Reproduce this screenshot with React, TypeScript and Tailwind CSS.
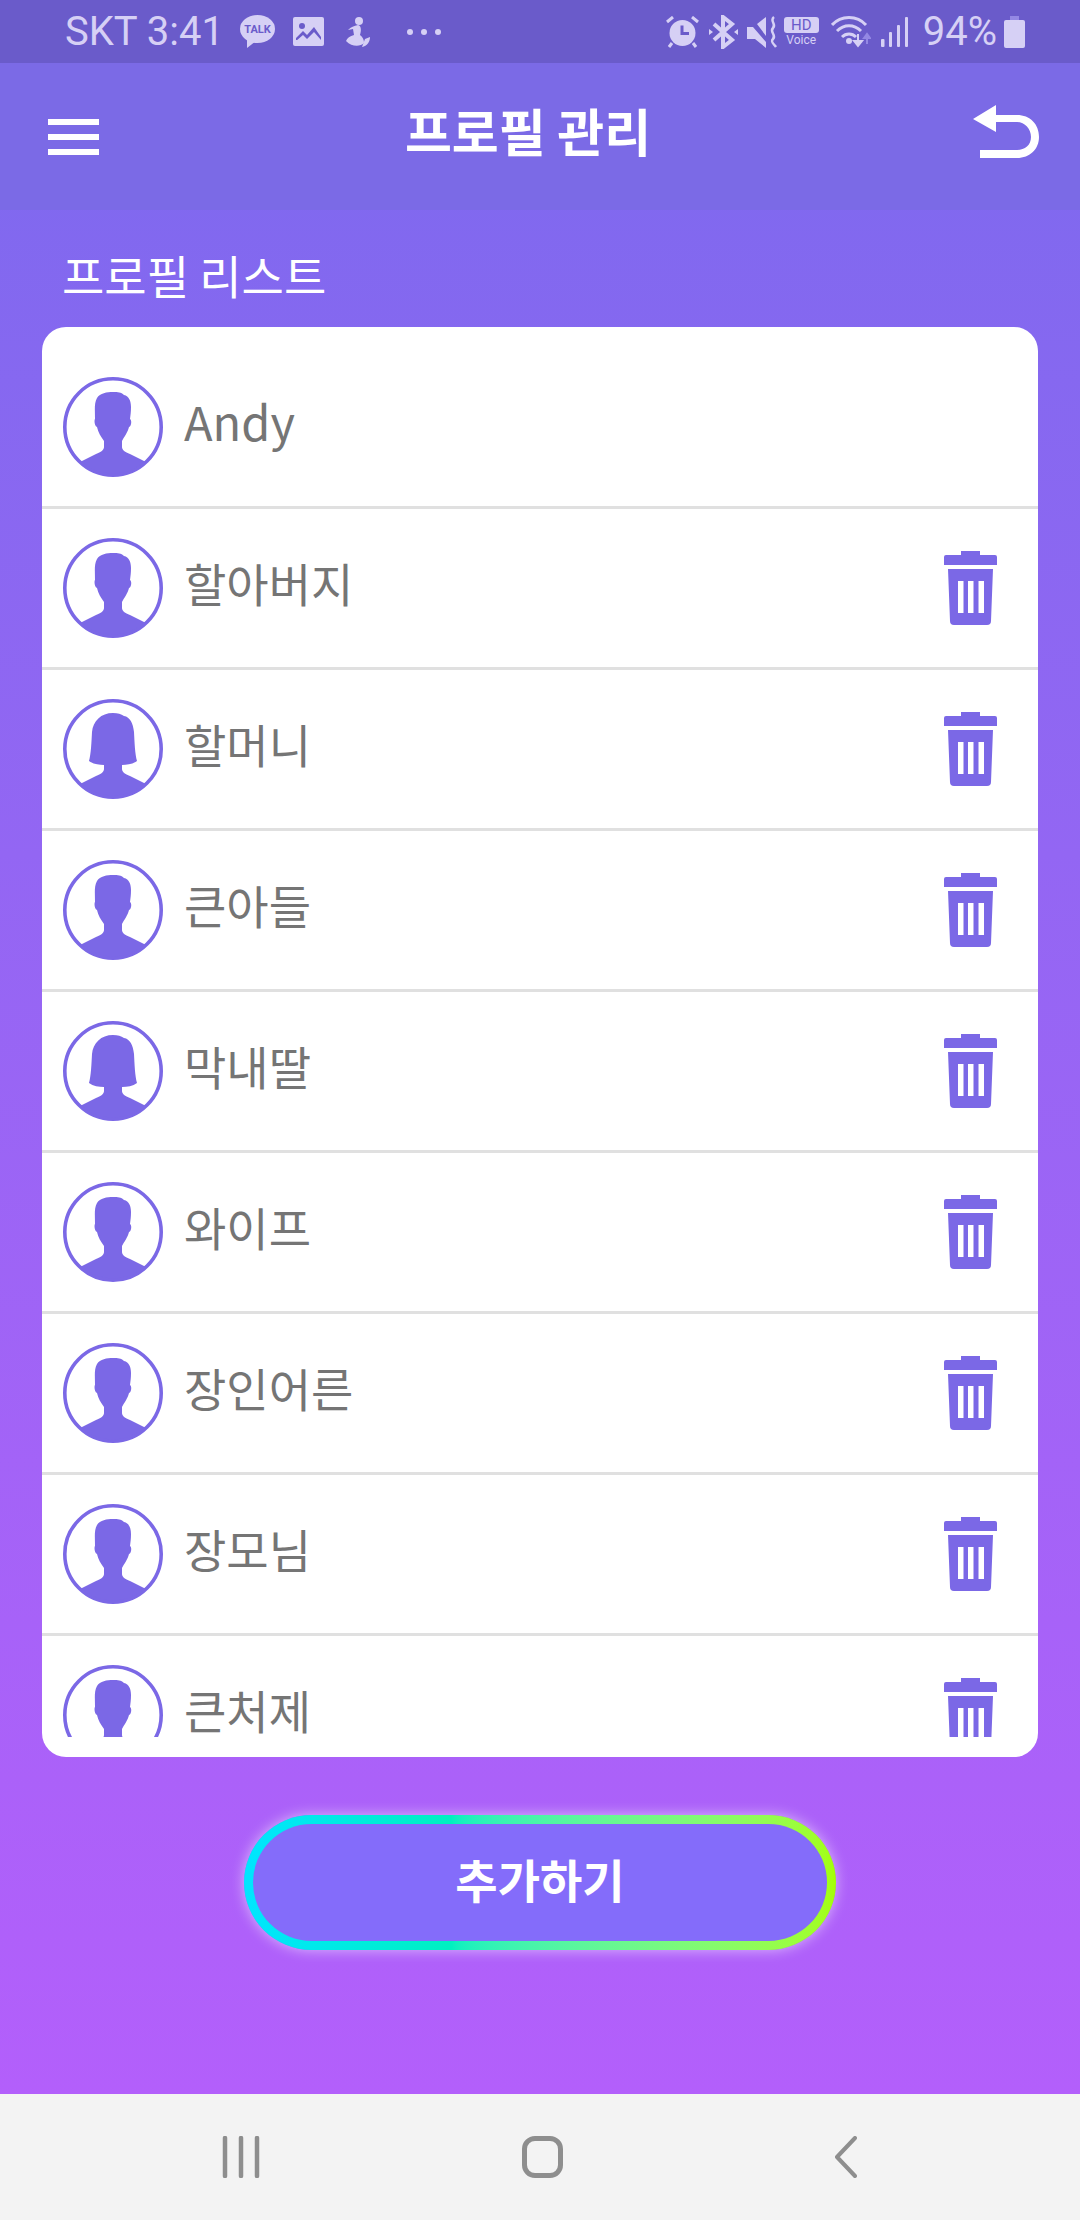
const FONT = 'font-["Noto_Sans_CJK_KR","Noto_Sans",sans-serif]'

type Person = { name: string; female?: boolean; main?: boolean }

const people: Person[] = [
  { name: 'Andy', main: true },
  { name: '할아버지' },
  { name: '할머니', female: true },
  { name: '큰아들' },
  { name: '막내딸', female: true },
  { name: '와이프' },
  { name: '장인어른' },
  { name: '장모님' },
  { name: '큰처제' },
]

function Avatar({ female }: { female?: boolean }) {
  return (
    <svg viewBox="0 0 100 100" className="w-[100px] h-[100px] shrink-0">
      <circle cx="50" cy="50" r="48" fill="#fff" />
      {female ? (
        <path
          fill="#7b68e6"
          d="M50 14C55 14 58 15 61 17C67 18 70 24 71 33C71.500 43 72 55 74 62C70 65 64 66 59 66L59 70C59 73 62 75 67 77L83 85A48 48 0 0 1 17 85L33 77C38 75 41 73 41 70L41 66C36 66 30 65 26 62C28 55 28.500 43 29 33C30 22 38 14 50 14Z"
        />
      ) : (
        <path
          fill="#7b68e6"
          d="M32 42C32 34 31 26 34 21C37 16 44 15 50 15C55 15 58 15 61 18C66 19 68 24 68 30C68 35 67.500 38 67 42C69 43 68.500 49 66 50C65 55 61 60 59 64L59 70C59 73 62 75 67 77L83 85A48 48 0 0 1 17 85L33 77C38 75 41 73 41 70L41 64C38 60 35 55 34 50C31.500 49 31 43 32 42Z"
        />
      )}
      <circle cx="50" cy="50" r="48.200" fill="none" stroke="#7b68e6" strokeWidth="3.600" />
    </svg>
  )
}

function Trash() {
  return (
    <svg viewBox="0 0 53 74" className="w-[53px] h-[74px] shrink-0">
      <path fill="#7b68e6" d="M17 0H36V4H51Q53 4 53 6V14H0V6Q0 4 2 4H17Z" />
      <path
        fill="#7b68e6"
        fillRule="evenodd"
        d="M4 18H49L47 70Q47 74 43 74H10Q6 74 6 70ZM14 30V62H19.500V30ZM24 30V62H29.500V30ZM34.500 30V62H40V30Z"
      />
    </svg>
  )
}

function StatusIcons() {
  const c = '#d6d0f5'
  return (
    <div className="flex items-center">
      {/* alarm */}
      <svg viewBox="0 0 33 32" className="w-[33px] h-[32px]">
        <circle cx="16.500" cy="17" r="13" fill={c} />
        <path d="M14.500 9.500H17.500V16H23V19H14.500Z" fill="#6a5bca" />
        <path d="M1 6L7 1M32 6L26 1M6 27L3 31M27 27L30 31" stroke={c} strokeWidth="3" />
      </svg>
      {/* bluetooth */}
      <svg viewBox="0 0 29 34" className="w-[29px] h-[34px] ml-[10px]">
        <path d="M5 9L23 25L14 32V2L23 9L5 25" fill="none" stroke={c} strokeWidth="4" />
        <path d="M0 14L4 17L0 20ZM29 14L25 17L29 20Z" fill={c} />
      </svg>
      {/* mute + vibrate */}
      <svg viewBox="0 0 31 32" className="w-[31px] h-[32px] ml-[9px]">
        <path d="M0 11H6L19 26V32L8 23H0ZM10 8L19 1V20Z" fill={c} />
        <path d="M27 1C22 5 30 8 26 12C22 16 30 19 26 23C23 26 27 28 29 31" fill="none" stroke={c} strokeWidth="2.500" />
      </svg>
      {/* HD voice */}
      <div className="ml-[6px] w-[35px] flex flex-col items-center">
        <div className="w-[35px] h-[16px] rounded-[3px] bg-[#d6d0f5] text-[#6a5bca] text-[15px] leading-[16px] text-center font-['Roboto',sans-serif]">HD</div>
        <div className="text-[#d6d0f5] text-[12px] leading-[13px] mt-[1px] font-['Roboto',sans-serif]">Voice</div>
      </div>
      {/* wifi */}
      <svg viewBox="0 0 40 33" className="w-[40px] h-[33px] ml-[12px]">
        <path d="M1 10C10 0 26 0 35 10M6 16C13 9 23 9 30 16M11 22C15 18 21 18 25 22" fill="none" stroke={c} strokeWidth="3" />
        <circle cx="18" cy="26" r="3" fill={c} />
        <path d="M27 19V27M23 26L27 31L31 26Z" stroke={c} strokeWidth="2" fill={c} />
        <path d="M36 29V21M33 23L36 19L39 23Z" stroke="#9488e4" strokeWidth="2" fill="#9488e4" />
      </svg>
      {/* signal */}
      <svg viewBox="0 0 27 30" className="w-[27px] h-[30px] ml-[10px]">
        <rect x="0" y="22" width="3.500" height="8" rx="1" fill={c} />
        <rect x="8" y="15" width="3" height="15" rx="1" fill={c} />
        <rect x="16" y="8" width="3" height="22" rx="1" fill={c} />
        <rect x="24" y="0" width="3" height="30" rx="1" fill={c} />
      </svg>
      <span className="ml-[15px] text-[#d6d0f5] text-[40px] leading-none font-['Roboto',sans-serif]">94%</span>
      {/* battery */}
      <svg viewBox="0 0 21 32" className="w-[21px] h-[32px] ml-[7px]">
        <path d="M6 0H15V4H6Z" fill="#9488e4" />
        <rect x="0" y="4" width="21" height="28" rx="2" fill={c} />
      </svg>
    </div>
  )
}

function StatusLeft() {
  const c = '#d6d0f5'
  return (
    <div className="flex items-center">
      <span className="text-[#d6d0f5] text-[40px] leading-none font-['Roboto',sans-serif]">SKT 3:41</span>
      <svg viewBox="0 0 35 33" className="w-[35px] h-[33px] ml-[16px]">
        <ellipse cx="17.500" cy="14" rx="17.500" ry="14" fill={c} />
        <path d="M7 24L7 33L16 26Z" fill={c} />
        <text x="17.500" y="18" textAnchor="middle" fontSize="11" fontWeight="700" fill="#6a5bca" fontFamily="Roboto, sans-serif">TALK</text>
      </svg>
      <svg viewBox="0 0 31 29" className="w-[31px] h-[29px] ml-[18px]">
        <rect width="31" height="29" rx="2" fill={c} />
        <circle cx="9" cy="9" r="3" fill="#6a5bca" />
        <path d="M3 21L10 14L14 18L21 10L28 20V23H3Z" fill="#6a5bca" />
        <path d="M3 25H28V23L21 15L14 22L10 18L3 24Z" fill={c} />
      </svg>
      <svg viewBox="0 0 26 30" className="w-[26px] h-[30px] ml-[21px]">
        <circle cx="14" cy="4" r="4" fill={c} />
        <path d="M13 8C17 9 16 15 15 18C18 20 19 23 19 26C15 30 7 30 1 24C2 21 5 19 9 18L8 12L3 13C6 10 9 9 13 8Z" fill={c} />
        <path d="M20 22L25 20C25 25 22 29 17 30Z" fill={c} />
      </svg>
      <div className="flex gap-[8px] ml-[36px]">
        <span className="w-[6px] h-[6px] rounded-full bg-[#d6d0f5]" />
        <span className="w-[6px] h-[6px] rounded-full bg-[#d6d0f5]" />
        <span className="w-[6px] h-[6px] rounded-full bg-[#d6d0f5]" />
      </div>
    </div>
  )
}

export default function App() {
  return (
    <div className={`w-[1080px] h-[2220px] flex flex-col overflow-hidden ${FONT}`}>
      <div className="h-[63px] shrink-0 bg-[#6a5bca] flex items-center justify-between pl-[65px] pr-[55px]">
        <StatusLeft />
        <StatusIcons />
      </div>

      <div className="flex-1 flex flex-col bg-gradient-to-b from-[#7d69ee] to-[#b35ffb]">
        <header className="h-[147px] shrink-0 bg-[#7b6ae6] flex items-center justify-between pl-[48px] pr-[41px]">
          <div className="w-[51px] flex flex-col gap-[9px]">
            <div className="h-[6px] bg-white" />
            <div className="h-[6px] bg-white" />
            <div className="h-[6px] bg-white" />
          </div>
          <h1 className="text-[51px] leading-none font-bold text-white mr-[16px] -mt-[12px]">프로필 관리</h1>
          <svg viewBox="0 0 66 53" className="w-[66px] h-[53px] -mt-[10px]">
            <path d="M0 14L23 0V10H44C57 10 66 19 66 32C66 44 57 53 44 53H7V45H44C52 45 58 40 58 32C58 24 52 17 44 17H23V27Z" fill="#fff" />
          </svg>
        </header>

        <main className="flex-1 flex flex-col">
          <h2 className="text-[46px] leading-[50px] text-white mt-[39px] pl-[62px]">프로필 리스트</h2>

          <div className="mt-[28px] mx-[42px] h-[1430px] bg-white rounded-[24px] overflow-hidden pb-[20px]">
            <div className="h-full overflow-hidden">
              {people.map((p) => (
                <div
                  key={p.name}
                  className={`flex items-center pl-[21px] pr-[41px] border-b-[3px] border-[#e0e0e0] ${
                    p.main ? 'h-[182px] pt-[21px]' : 'h-[161px] shrink-0'
                  }`}
                >
                  <Avatar female={p.female} />
                  <span className={`ml-[21px] -mt-[12px] flex-1 text-[#757575] leading-[50px] ${p.main ? 'text-[47px]' : 'text-[46px]'}`}>
                    {p.name}
                  </span>
                  {!p.main && <Trash />}
                </div>
              ))}
            </div>
          </div>

          <button className="mt-[58px] mx-auto w-[592px] h-[135px] rounded-full p-[9px] bg-gradient-to-r from-[#00e5ff] via-[#00f0c0] via-35% to-[#a4ff00] shadow-[0_0_14px_rgba(255,255,255,0.55)]">
            <span className="w-full h-full rounded-full bg-[#846cfa] flex items-center justify-center pb-[8px] text-white text-[46px] font-bold">
              추가하기
            </span>
          </button>
        </main>
      </div>

      <nav className="h-[126px] shrink-0 bg-[#f3f3f3] flex items-center pl-[222px] pb-[1px]">
        <svg viewBox="0 0 38 42" className="w-[38px] h-[42px]">
          <path d="M3 2V40M19 2V40M35 2V40" stroke="#8e8e8e" strokeWidth="4.500" strokeLinecap="round" />
        </svg>
        <div className="ml-[262px] w-[41px] h-[42px] rounded-[13px] border-[5px] border-[#8e8e8e]" />
        <svg viewBox="0 0 23 42" className="w-[23px] h-[42px] ml-[271px]">
          <path d="M21 2L3 21L21 40" fill="none" stroke="#8e8e8e" strokeWidth="4" strokeLinecap="round" strokeLinejoin="round" />
        </svg>
      </nav>
    </div>
  )
}
